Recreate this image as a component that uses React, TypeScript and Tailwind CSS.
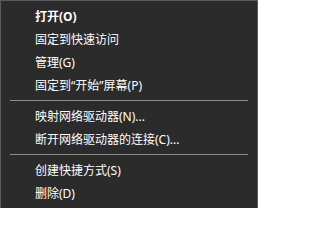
import React from "react";

type Entry = { label: string; bold?: boolean } | "sep";

const entries: Entry[] = [
  { label: "打开(O)", bold: true },
  { label: "固定到快速访问" },
  { label: "管理(G)" },
  { label: "固定到“开始”屏幕(P)" },
  "sep",
  { label: "映射网络驱动器(N)..." },
  { label: "断开网络驱动器的连接(C)..." },
  "sep",
  { label: "创建快捷方式(S)" },
  { label: "删除(D)" },
];

export default function App() {
  return (
    <div
      className="w-[258px] h-[208px] bg-[#2b2b2b] border-l border-t border-r border-[#5a5a5a] pt-[4px] overflow-hidden text-white text-[12px] leading-none"
      style={{ fontFamily: '"Noto Sans", "Noto Sans CJK SC", sans-serif' }}
    >
      {entries.map((e, i) =>
        e === "sep" ? (
          <div key={i} className="h-[8px] pt-[3px]">
            <div className="h-px mx-[9px] bg-[#8c8c8c]" />
          </div>
        ) : (
          <div
            key={i}
            className={`h-[23px] flex items-center pl-[34px] ${e.bold ? "font-bold" : "font-normal"}`}
          >
            {e.label}
          </div>
        )
      )}
    </div>
  );
}
